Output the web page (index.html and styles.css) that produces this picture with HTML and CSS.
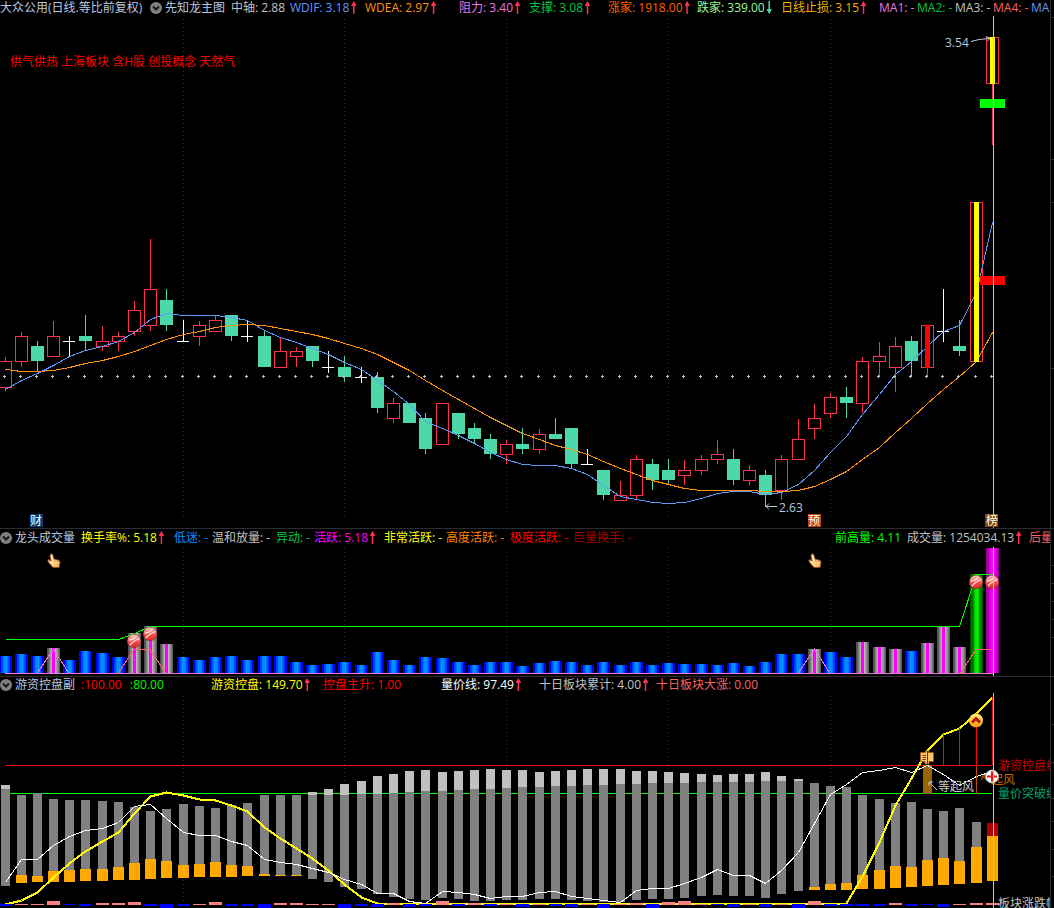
FILE: index.html
```
<!DOCTYPE html>
<html lang="zh-CN">
<head>
<meta charset="utf-8">
<title>大众公用 日线</title>
<link rel="stylesheet" href="styles.css">
</head>
<body>
<main class="terminal">

<section class="panel">
  <header class="readout readout-price">
    <h1 class="c-title">大众公用(日线.等比前复权)</h1>
    <button class="fold" type="button" aria-label="主图指标菜单"><svg viewBox="0 0 12 12"><circle cx="6" cy="6" r="6"/><path d="M3 4.5 6 7.5 9 4.5"/></svg></button>
    <span class="c-title">先知龙主图</span>
    <span class="c-gray">中轴: 2.88</span>
    <span class="c-blue">WDIF: 3.18<i class="up"></i></span>
    <span class="c-orange">WDEA: 2.97<i class="up"></i></span>
    <span class="c-pink">阻力: 3.40<i class="up"></i></span>
    <span class="c-green">支撑: 3.08<i class="up"></i></span>
    <span class="c-tangerine">涨家: 1918.00<i class="up"></i></span>
    <span class="c-mint">跌家: 339.00<i class="down"></i></span>
    <span class="c-gold">日线止损: 3.15<i class="up"></i></span>
    <span class="c-pink">MA1: -</span>
    <span class="c-green">MA2: -</span>
    <span class="c-gray">MA3: -</span>
    <span class="c-salmon">MA4: -</span>
    <span class="c-blue">MA5: -</span>
  </header>
  <svg class="chart" viewBox="0 16 1054 512" role="img" aria-label="日K线图">
    <g id="price"></g>
    <text class="concepts" x="10" y="66">供气供热 上海板块 含H股 创投概念 天然气</text>
    <path class="cursor" d="M993.5 15V528"/>
    <g class="mark">
      <text x="945" y="47">3.54</text>
      <path d="M971 41.500 979 39.500 990 38.500M986 36.500 990 38.500 987 41.500"/>
      <text x="779" y="512">2.63</text>
      <path d="M766 506.500H777M769 503.500 766 506.500 769 509.500"/>
    </g>
    <rect x="30" y="514" width="13" height="13" fill="#003a70"/>
    <rect x="808" y="514" width="13" height="13" fill="#c04408"/>
    <rect x="985" y="514" width="13" height="13" fill="#804000"/>
    <g class="tag"><text x="30" y="525">财</text><text x="808" y="525">预</text><text x="986" y="525">榜</text></g>
  </svg>
</section>

<section class="panel">
  <header class="readout readout-volume">
    <button class="fold" type="button" aria-label="成交量指标菜单"><svg viewBox="0 0 12 12"><circle cx="6" cy="6" r="6"/><path d="M3 4.5 6 7.5 9 4.5"/></svg></button>
    <span class="c-title">龙头成交量</span>
    <span class="c-yellow">换手率%: 5.18<i class="up"></i></span>
    <span class="c-azure">低迷: -</span>
    <span class="c-gray">温和放量: -</span>
    <span class="c-green">异动: -</span>
    <span class="c-magenta">活跃: 5.18<i class="up"></i></span>
    <span class="c-yellow">非常活跃: -</span>
    <span class="c-amber">高度活跃: -</span>
    <span class="c-red">极度活跃: -</span>
    <span class="c-maroon">巨量换手: -</span>
    <span class="c-lime">前高量: 4.11</span>
    <span class="c-gray">成交量: 1254034.13<i class="up"></i></span>
    <span class="c-salmon">后量</span>
  </header>
  <svg class="chart" viewBox="0 547 1054 129" role="img" aria-label="成交量图">
    <defs>
      <linearGradient id="blue"><stop offset=".15" stop-color="#0000f0"/><stop offset=".15" stop-color="#0030ff"/><stop offset=".3" stop-color="#0050ff"/><stop offset=".38" stop-color="#0090ff"/><stop offset=".62" stop-color="#0090ff"/><stop offset=".7" stop-color="#0050ff"/><stop offset=".85" stop-color="#0030ff"/><stop offset=".85" stop-color="#0000f0"/></linearGradient>
      <linearGradient id="active"><stop offset=".08" stop-color="#505050"/><stop offset=".22" stop-color="#888"/><stop offset=".37" stop-color="#b8b8b8"/><stop offset=".37" stop-color="#f0f"/><stop offset=".65" stop-color="#f0f"/><stop offset=".65" stop-color="#b8b8b8"/><stop offset=".8" stop-color="#909090"/><stop offset="1" stop-color="#505050"/></linearGradient>
      <linearGradient id="green"><stop offset="0" stop-color="#004800"/><stop offset=".25" stop-color="#008000"/><stop offset=".4" stop-color="#00e000"/><stop offset=".6" stop-color="#0f0"/><stop offset=".75" stop-color="#009000"/><stop offset="1" stop-color="#004800"/></linearGradient>
      <linearGradient id="magenta"><stop offset="0" stop-color="#900090"/><stop offset=".25" stop-color="#c000c0"/><stop offset=".4" stop-color="#f0f"/><stop offset=".65" stop-color="#f0f"/><stop offset=".8" stop-color="#c800c8"/><stop offset="1" stop-color="#900090"/></linearGradient>
      <linearGradient id="skin" x2="1" y2="1"><stop offset="0" stop-color="#fff4dc"/><stop offset=".6" stop-color="#ffcf80"/><stop offset="1" stop-color="#f5a850"/></linearGradient>
      <linearGradient id="red-ball" x2="0" y2="1"><stop offset="0" stop-color="#ffc8c4"/><stop offset=".35" stop-color="#f08880"/><stop offset=".6" stop-color="#f04848"/><stop offset="1" stop-color="#e02828"/></linearGradient>
      <g id="ball"><circle r="6.800" fill="url(#red-ball)" stroke="#901818" stroke-width=".5"/><path d="M-4 4Q-1 0 5.500-2.500M-5-1Q-1-1 2-4" fill="none" stroke="#ffe4e0" stroke-width="1.300"/></g>
      <g id="hand"><path d="M-3.500-7Q-1.500-8-1-5.500L0-2 4-1Q6.500-.5 6 2L5 6.500H-1L-5 2Q-7-.5-5.500-1.500L-3 0-4-5Z" fill="url(#skin)" stroke="#8a4a20"/><path d="M1-1.500V1M3.500-1V1" stroke="#c88040" stroke-width=".7"/></g>
    </defs>
    <g id="volume"></g>
    <use href="#ball" x="134" y="641"/><use href="#ball" x="150" y="634"/><use href="#ball" x="976" y="582"/><use href="#ball" x="992" y="582"/>
    <use href="#hand" x="54" y="561"/><use href="#hand" x="815" y="561"/>
    <path class="cursor" d="M993.500 547V676"/>
  </svg>
</section>

<section class="panel">
  <header class="readout readout-control">
    <button class="fold" type="button" aria-label="控盘指标菜单"><svg viewBox="0 0 12 12"><circle cx="6" cy="6" r="6"/><path d="M3 4.5 6 7.5 9 4.5"/></svg></button>
    <span class="c-title">游资控盘副</span>
    <span class="c-red">:100.00</span>
    <span class="c-lime">:80.00</span>
    <span class="c-yellow">游资控盘: 149.70<i class="up"></i></span>
    <span class="c-red">控盘主升: 1.00</span>
    <span class="c-white">量价线: 97.49<i class="up"></i></span>
    <span class="c-gray">十日板块累计: 4.00<i class="up"></i></span>
    <span class="c-salmon">十日板块大涨: 0.00</span>
  </header>
  <svg class="chart" viewBox="0 693 1054 215" role="img" aria-label="游资控盘图">
    <defs>
      <linearGradient id="sun" x2="0" y2="1"><stop offset="0" stop-color="#fff070"/><stop offset=".5" stop-color="#ffd030"/><stop offset="1" stop-color="#ff9010"/></linearGradient>
    </defs>
    <g id="control"></g>
    <g transform="translate(927 757)">
      <path d="M-1.500-6H1.500V-4.500H6.500V4.500H2V7H-2V4.500H-6.500V-4.500H-1.500Z" fill="#ffc468" stroke="#a05010" stroke-width=".8"/>
      <path d="M-4.500-1.500H-1M-4.500 .5H-1M-4.500 2.500H-1" stroke="#804000"/><path d="M.5-6V7" stroke="#e00000"/>
    </g>
    <g transform="translate(976 720.500)">
      <circle r="7" fill="url(#sun)"/><path d="M-4 2 0-2 4 2" fill="none" stroke="#c01010" stroke-width="3"/>
    </g>
    <text x="938" y="791" fill="#c8c8c8">等起风</text>
    <path d="M937 790 929 782M929 786V782H933" fill="none" stroke="#c8c8c8"/>
    <text x="991" y="784" fill="#c86400">起风</text>
    <path d="M988 781 982 776M982 780V776H986" fill="none" stroke="#c86400"/>
    <g transform="translate(992 776.500)"><circle r="6.500" fill="#fff" stroke="#b0b0b0"/><path d="M0-5V5M-5 0H5" stroke="#f01010" stroke-width="2"/></g>
    <text x="998" y="770" fill="#c80000">游资控盘线</text>
    <text x="998" y="798" fill="#00a070">量价突破线</text>
    <text x="998" y="908" fill="#c8c8c8">板块涨跌幅</text>
    <path class="cursor" d="M993.500 692V908"/>
    <g id="control-axis"></g>
  </svg>
</section>

</main>
<script src="chart.js"></script>
</body>
</html>
```

FILE: styles.css
```
* { box-sizing: border-box; }

body {
  margin: 0;
  background: #000;
  color: #c0c0c0;
  font: 12px/16px "Open Sans", "Noto Sans CJK SC", sans-serif;
  overflow-x: hidden;
}

.terminal { display: flex; flex-direction: column; }
.panel { border-bottom: 1px solid #2c2c34; }
.panel:last-child { border-bottom: 0; }

.readout {
  display: grid;
  align-items: center;
  height: 16px;
  margin-right: 3px;
  border-right: 1px solid #2c2c34;
  overflow: hidden;
  white-space: nowrap;
}
.readout-price {
  grid-template-columns: 150px 15px 66px 59px 75px 94px 70px 79px 89px 84px 98px 38px 38px 38px 38px 40px;
}
.readout-volume {
  height: 18px;
  grid-template-columns: 15px 66px 93px 38px 64px 38px 70px 62px 64px 63px 262px 72px 122px 30px;
}
.readout-control {
  grid-template-columns: 15px 66px 49px 81px 112px 118px 98px 117px 110px;
}
.readout h1 { margin: 0; font: inherit; }
.readout span, .readout h1 { min-width: 0; }

.fold {
  width: 12px;
  height: 12px;
  padding: 0;
  border: 0;
  background: none;
  cursor: pointer;
}
.fold svg { display: block; width: 12px; height: 12px; }
.fold circle { fill: #808080; }
.fold path { fill: none; stroke: #181818; stroke-width: 2; }

.up, .down {
  display: inline-block;
  width: 5px;
  height: 13px;
  margin-left: 2px;
  vertical-align: -2px;
  background: #ff3050;
  clip-path: polygon(50% 0, 100% 32%, 100% 38%, 65% 38%, 65% 100%, 35% 100%, 35% 38%, 0 38%, 0 32%);
}
.down {
  background: #4cd8a8;
  clip-path: polygon(35% 0, 65% 0, 65% 62%, 100% 62%, 100% 68%, 50% 100%, 0 68%, 0 62%, 35% 62%);
}

.c-title { color: #b8c8e0; }
.c-gray { color: #c0c0c0; }
.c-white { color: #fff; }
.c-blue { color: #6098f8; }
.c-azure { color: #0090ff; }
.c-orange { color: #ff9010; }
.c-amber { color: #ff8000; }
.c-tangerine { color: #ff6000; }
.c-gold { color: #f0b000; }
.c-yellow { color: #ff0; }
.c-pink { color: #e878e0; }
.c-magenta { color: #f0f; }
.c-green { color: #00c840; }
.c-lime { color: #0f0; }
.c-mint { color: #98f898; }
.c-salmon { color: #ff6060; }
.c-red { color: #f00; }
.c-maroon { color: #a00000; }

.chart { display: block; width: 100%; height: auto; }
.chart text { font-size: 12px; }
.chart .concepts { fill: #f00; }
.chart .tag { fill: #fff; }
.mark text { fill: #b8c8e0; }
.mark path { fill: none; stroke: #b8c8e0; }
.cursor { stroke: #b8c8e0; shape-rendering: crispEdges; }

#price, #volume, #control, #control-axis { shape-rendering: crispEdges; }
.grid { stroke: #303030; stroke-dasharray: 1 3; }
.axis { fill: none; stroke: #2c2c34; }
.line { fill: none; stroke-width: 1; }
```

FILE: chart.js
```
const STEPS = [6, 11, 16, 22, 27, 33, 38, 43, 49, 54, 60];
const COUNT = 62;
const xAt = i => 5 + 16 * i + STEPS.filter(s => s <= i).length;
const rect = (x, y, w, h, fill) => `<rect x="${x}" y="${y}" width="${w}" height="${h}" fill="${fill}"/>`;
const line = (ys, color, width = 1) =>
  `<polyline class="line" style="stroke:${color};stroke-width:${width}" points="${ys.map((y, i) => `${xAt(i) + .5},${y + .5}`).join(' ')}"/>`;
const segment = (pts, color) => `<polyline class="line" style="stroke:${color}" points="${pts}"/>`;
const grid = (top, bottom) =>
  [11, 21, 31, 41, 51].map(i => `<path class="grid" d="M${xAt(i) + .5} ${top}V${bottom}"/>`).join('');
const axis = (top, bottom, ticks) =>
  `<path class="axis" d="M1050.5 ${top}V${bottom}${ticks.map(y => `M1051 ${y + .5}H1054`).join('')}"/>`;
const draw = (id, parts) => { document.getElementById(id).innerHTML = parts.join(''); };

/* kind, high, body top, body bottom, low */
const CANDLES = `r 357 361 387 391|r 332 336 361 367|g 341 346 361 371|r 321 336 356 356|w 336 341 341 356|g 315 336 341 351|r 326 341 346 351|r 332 336 341 351|r 301 310 331 336|r 239 289 325 331|g 289 300 325 331|w 320 341 341 341|r 321 325 336 346|r 315 320 331 331|g 315 315 336 341|w 320 336 336 341|g 331 336 367 367|r 337 351 367 367|r 347 351 356 367|g 346 346 361 367|w 351 367 367 372|g 356 367 377 382|w 367 377 377 382|g 372 377 408 413|r 398 403 418 423|g 403 403 423 423|g 413 418 449 454|r 403 403 444 444|g 413 413 434 439|g 423 428 439 443|g 434 439 454 459|r 440 444 454 464|g 428 444 449 454|r 429 434 449 454|g 418 434 439 439|g 428 428 464 469|w 449 464 464 464|g 470 470 495 500|r 481 495 500 500|r 455 459 495 500|g 459 464 480 490|g 459 470 480 484|r 460 470 475 485|r 455 459 470 475|r 440 454 459 464|g 449 459 480 485|r 465 470 480 485|g 470 475 495 507|r 455 459 490 500|r 419 439 459 459|r 404 418 428 439|r 393 397 413 418|g 387 397 403 418|r 357 361 403 413|r 342 356 361 376|r 337 346 367 392|g 336 341 361 377|r 325 325 367 376|w 289 331 331 341|g 320 346 351 356|r 202 202 361 361|r 37 37 83 145`
  .split('|').map(s => s.split(' ').map((v, i) => i ? +v : v));
const DIF = [389,380,373,365,356,350,346,341,332,319,313,315,315,315,317,320,330,337,342,348,354,362,369,380,391,404,421,428,435,443,452,459,464,465,465,468,474,485,496,499,502,503,502,498,493,491,491,494,492,484,470,452,436,414,394,374,361,346,331,325,292,222];
const DEA = [369,371,371,370,367,363,360,356,351,345,339,334,331,327,325,324,325,328,331,334,338,343,348,354,362,370,380,390,399,408,417,425,433,439,445,449,454,461,468,474,480,484,488,490,490,490,490,491,491,490,486,479,471,459,447,432,418,403,389,376,361,332];

const candle = ([kind, high, top, bottom, low], i) => {
  const x = xAt(i);
  if (kind === 'w') return rect(x, high, 1, low - high + 1, '#fff') + rect(x - 6, top, 12, 1, '#fff');
  if (kind === 'g') return rect(x, high, 1, low - high, '#4cd8a8') + rect(x - 6, top, 13, bottom - top, '#4cd8a8');
  return rect(x, high, 1, top - high, '#ff3050') + rect(x, bottom, 1, low - bottom, '#ff3050') +
    `<rect x="${x - 5.5}" y="${top + .5}" width="12" height="${bottom - top}" fill="none" stroke="#ff3050"/>`;
};

draw('price', [
  grid(19, 517),
  axis(16, 528, [17, 159, 202, 368]),
  CANDLES.map(candle).join(''),
  line(DIF, '#6098f8'),
  line(DEA, '#ff9010'),
  CANDLES.map((_, i) => rect(xAt(i) - 2, 376, 3, 1, '#c0c0c0') + rect(xAt(i) - 1, 375, 1, 3, '#c0c0c0')).join(''),
  rect(925, 325, 5, 43, '#f00'),
  rect(974, 202, 5, 160, '#ff0'),
  rect(990, 37, 5, 47, '#ff0'),
  rect(980, 99, 25, 9, '#0f0'),
  rect(980, 276, 25, 9, '#f00'),
]);

const VOLUME = [656,654,656,648,660,651,653,657,633,626,644,657,660,657,656,660,656,656,662,665,664,662,665,652,660,665,657,658,662,665,662,662,666,663,661,662,665,662,665,662,665,663,664,664,665,663,666,662,654,654,649,652,657,642,647,649,651,643,626,647,574,548];
const ACTIVE = [3, 8, 9, 10, 50, 53, 54, 55, 57, 58, 59];
const volumeFill = i => i === 60 ? 'green' : i === 61 ? 'magenta' : ACTIVE.includes(i) ? 'active' : 'blue';
const PEAK = VOLUME.map((_, i) => i < 8 ? 639 : i === 8 ? 633 : i < 60 ? 626 : 574);

draw('volume', [
  grid(548, 673),
  axis(547, 676, [565, 583, 601, 619, 637]),
  VOLUME.map((y, i) => rect(xAt(i) - 6, y, 13, 673 - y, `url(#${volumeFill(i)})`)).join(''),
  line(PEAK, '#0f0'),
  segment('5,673.5 993,673.5', '#e878e0'),
  segment('37,673.5 53.5,649 69,673.5', '#e878e0'),
  segment('798,673.5 814.5,649 830,673.5', '#e878e0'),
  segment('118,673.5 134,649.5 150,649.5 166,673.5', '#ff6060'),
  segment('960,673.5 976,649.5 992,649.5', '#ff6060'),
]);

/* Gray column tops, and where the lighter cap ends */
const TOPS = [785,795,793,799,800,800,801,802,807,811,809,804,806,808,805,803,795,795,795,792,789,784,781,776,774,771,770,772,771,770,769,770,770,772,771,770,769,769,769,771,771,772,773,774,775,774,774,772,776,779,783,786,787,795,799,803,802,809,811,808,822,823];
const CAPS = { 0: 789, 19: 795, 20: 795, 21: 795, 22: 794, 23: 794, 24: 793, 25: 792, 26: 791, 27: 791, 28: 790, 29: 789, 30: 789, 31: 788, 32: 787, 33: 787, 34: 786, 35: 786, 36: 785, 37: 785, 38: 784, 39: 784, 40: 783, 41: 783, 42: 783, 43: 782, 44: 782, 45: 782, 46: 782, 47: 781, 48: 781, 49: 781 };
const BOTTOMS = [886,883,882,882,882,881,881,880,880,879,878,878,877,877,877,876,876,876,876,879,882,887,889,894,897,899,900,898,899,901,901,900,900,899,899,900,901,902,902,900,899,899,898,896,895,896,896,898,894,891,890,890,890,889,889,888,887,886,885,884,883,881];
const ORANGE = { 1: 875, 2: 876, 3: 871, 4: 870, 5: 869, 6: 869, 7: 867, 8: 863, 9: 859, 10: 861, 11: 865, 12: 864, 13: 862, 14: 865, 15: 866, 16: 874, 17: 875, 18: 875, 50: 887, 51: 884, 52: 883, 53: 875, 54: 870, 55: 866, 56: 867, 57: 860, 58: 858, 59: 861, 60: 847, 61: 836 };
const CONTROL = [904,900,892,877,863,851,841,832,813,796,792,795,799,800,805,811,827,838,848,858,870,884,897,903,...Array(28).fill(903),903,876,842,805,778,750,734,728,713,697];
const PRICE_VOLUME = [882,859,859,845,836,830,828,822,806,804,818,832,835,835,841,845,859,862,864,868,872,879,884,893,893,901,903,891,892,894,898,896,896,892,891,896,898,900,902,890,888,888,883,877,869,875,875,883,870,852,823,794,784,772,770,767,772,765,774,785,776,771];
const SECTOR = [-2,1,1,4,-1,-2,2,2,3,-2,-4,-2,1,3,-2,-2,-4,2,2,1,1,-4,-2,-3,2,-3,-2,4,-2,2,-2,1,-3,1,-2,-3,1,-4,1,2,-4,3,4,1,-1,-3,1,-3,1,-4,4,-2,-2,-2,-2,2,-2,-1,-3,1,2,2];

const column = (top, i) => {
  const x = xAt(i);
  const wide = i === COUNT - 1;
  let out = rect(wide ? x - 5 : x - 4, top, wide ? 11 : 9, BOTTOMS[i] - top, wide ? '#b00000' : '#808080');
  if (CAPS[i]) out += rect(x - 4, top, 9, CAPS[i] - top, '#c0c0c0');
  if (ORANGE[i]) out += rect(x - 5, ORANGE[i], 11, BOTTOMS[i] - ORANGE[i], '#ffa800');
  return out;
};

draw('control', [
  grid(696, 902),
  segment('5,765.5 992,765.5', '#f00'),
  segment('5,793.5 992,793.5', '#0f0'),
  TOPS.map(column).join(''),
  rect(923, 765, 9, 29, '#966400'),
  line(CONTROL, '#ff0', 2),
  line(PRICE_VOLUME, '#fff'),
  SECTOR.map((v, i) => v > 0
    ? rect(xAt(i) - 6, 905 - v, 13, v, '#ff8080')
    : rect(xAt(i) - 6, 904, 13, -v, '#00f')).join(''),
  rect(943, 734, 1, 31, '#f00'),
  rect(959, 728, 1, 37, '#f00'),
  rect(976, 713, 1, 52, '#f00'),
  rect(976, 766, 1, 28, '#b05000'),
  rect(992, 697, 1, 68, '#f00'),
]);
draw('control-axis', [
  rect(1050, 693, 4, 215, '#000'),
  axis(693, 908, [724, 762, 798, 821, 849, 876]),
]);
```
